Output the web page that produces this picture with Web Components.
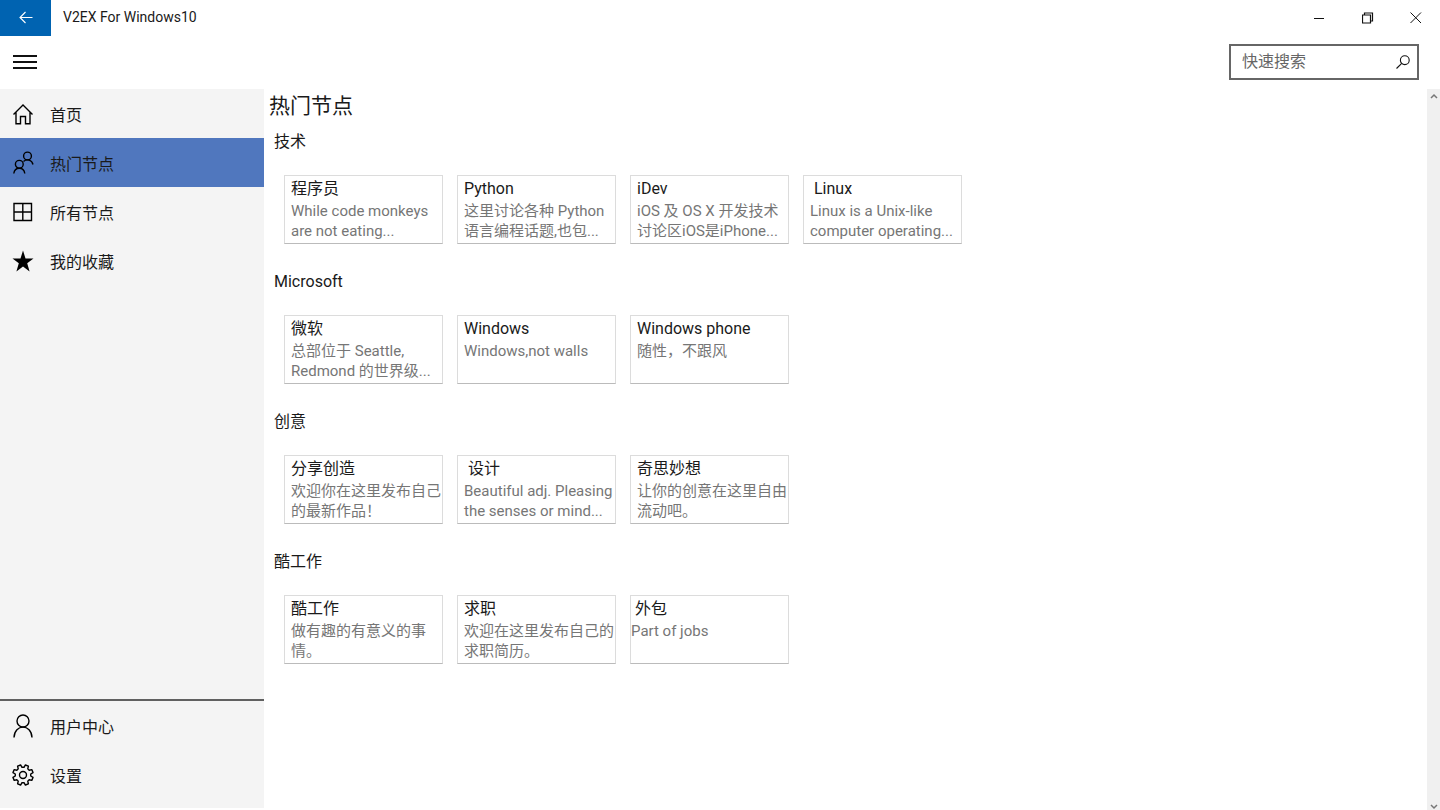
<!DOCTYPE html>
<html lang="zh-CN">
<head>
<meta charset="utf-8">
<meta name="viewport" content="width=device-width, initial-scale=1">
<title>V2EX For Windows10</title>
<style>
    body {
        margin: 0;
        font-family: Roboto, "Noto Sans CJK SC", sans-serif;
        font-size: 16px;
        color: #1a1a1a;
        background: #fff;
    }
</style>
</head>
<body>
<v2-app>
    <v2-titlebar slot="titlebar">V2EX For Windows10</v2-titlebar>
    <v2-toolbar slot="toolbar" placeholder="快速搜索"></v2-toolbar>

    <v2-nav slot="nav">
        <v2-nav-item icon="home">首页</v2-nav-item>
        <v2-nav-item icon="people" active>热门节点</v2-nav-item>
        <v2-nav-item icon="grid">所有节点</v2-nav-item>
        <v2-nav-item icon="star">我的收藏</v2-nav-item>
        <v2-nav-item slot="footer" icon="user">用户中心</v2-nav-item>
        <v2-nav-item slot="footer" icon="gear">设置</v2-nav-item>
    </v2-nav>

    <v2-page heading="热门节点">
        <v2-section heading="技术">
            <v2-node name="程序员">While code monkeys are not eating...</v2-node>
            <v2-node name="Python">这里讨论各种 Python 语言编程话题,也包...</v2-node>
            <v2-node name="iDev">iOS 及 OS X 开发技术讨论区iOS是iPhone...</v2-node>
            <v2-node name=" Linux">Linux is a Unix-like computer operating...</v2-node>
        </v2-section>
        <v2-section heading="Microsoft">
            <v2-node name="微软">总部位于 Seattle, Redmond 的世界级...</v2-node>
            <v2-node name="Windows">Windows,not walls</v2-node>
            <v2-node name="Windows phone">随性，不跟风</v2-node>
        </v2-section>
        <v2-section heading="创意">
            <v2-node name="分享创造">欢迎你在这里发布自己的最新作品！</v2-node>
            <v2-node name=" 设计">Beautiful adj. Pleasing the senses or mind...</v2-node>
            <v2-node name="奇思妙想">让你的创意在这里自由流动吧。</v2-node>
        </v2-section>
        <v2-section heading="酷工作">
            <v2-node name="酷工作">做有趣的有意义的事情。</v2-node>
            <v2-node name="求职">欢迎在这里发布自己的求职简历。</v2-node>
            <v2-node name=" 外包" flush>Part of jobs</v2-node>
        </v2-section>
    </v2-page>
</v2-app>

<script>
const ICONS = {
    home: '<path d="M2.5 12.500 12 3 21.500 12.500M5 10.300V21.700H9.500V14.500H14.500V21.700H19V10.300"/>',
    people: '<circle cx="16.500" cy="5" r="3.900"/><path d="M12.500 10.500C15.500 7.700 21 8.500 22 13.500"/><circle cx="8.300" cy="13.300" r="3.900"/><path d="M2.800 22.500C3.800 15.500 12.800 15.500 13.800 22.500"/>',
    grid: '<path d="M3 3.500H20.500V20.500H3ZM11.800 3.500V20.500M3 12H20.500"/>',
    star: '<path fill="currentColor" stroke="none" d="M12 1.500 14.500 9.500H22.500L16.200 14.300 18.600 22.500 12 17.500 5.400 22.500 7.800 14.300 1.500 9.500H9.500Z"/>',
    user: '<circle cx="12" cy="7" r="6"/><path d="M3 23.500C3.500 9.700 20.500 9.700 21 23.500"/>'
};

// Gear outline: eight rounded teeth around the hub
function gearPath() {
    const points = [];
    for (let i = 0; i < 8; i++) {
        [[-15, 7.8], [-9, 10.300], [9, 10.300], [15, 7.8]].forEach(([deg, r]) => {
            const a = (i * 45 + 22.500 + deg) * Math.PI / 180;
            points.push((12 + r * Math.cos(a)).toFixed(2) + ' ' + (12 + r * Math.sin(a)).toFixed(2));
        });
    }
    return `<path stroke-linejoin="round" d="M${points.join('L')}Z"/><circle cx="12" cy="12" r="3.500"/>`;
}
ICONS.gear = gearPath();

class V2App extends HTMLElement {
    constructor() {
        super();
        this.attachShadow({ mode: 'open' }).innerHTML = `
            <style>
                :host {
                    display: flex;
                    flex-direction: column;
                    height: 100vh;
                }
                .body {
                    display: flex;
                    flex: 1;
                    min-height: 0;
                }
            </style>
            <slot name="titlebar"></slot>
            <slot name="toolbar"></slot>
            <div class="body">
                <slot name="nav"></slot>
                <slot></slot>
            </div>
        `;
    }
}

class V2Titlebar extends HTMLElement {
    constructor() {
        super();
        this.attachShadow({ mode: 'open' }).innerHTML = `
            <style>
                :host {
                    display: flex;
                    height: 36px;
                    font-size: 14px;
                }
                button {
                    display: flex;
                    align-items: center;
                    justify-content: center;
                    width: 48px;
                    padding: 0;
                    border: 0;
                    background: none;
                    color: #111;
                }
                .back {
                    width: 51px;
                    background: #0063b1;
                    color: #fff;
                }
                .title {
                    flex: 1;
                    padding-left: 12px;
                    line-height: 34px;
                }
                svg {
                    fill: none;
                    stroke: currentColor;
                }
            </style>
            <button class="back" aria-label="返回">
                <svg width="16" height="14" viewBox="0 0 16 14" stroke-width="1.1"><path d="M14.500 6.500H2M7.500 1 2 6.500 7.500 12"/></svg>
            </button>
            <div class="title"><slot></slot></div>
            <button aria-label="最小化">
                <svg width="12" height="12" viewBox="0 0 12 12"><path d="M0 6.500H10"/></svg>
            </button>
            <button aria-label="还原">
                <svg width="12" height="12" viewBox="0 0 12 12" stroke-width="1.2"><path d="M.5 3H8.500V11H.5ZM2.500 3V1H10.500V9H8.500"/></svg>
            </button>
            <button aria-label="关闭">
                <svg width="12" height="12" viewBox="0 0 12 12"><path d="M.5.500 11 11M11 .500.500 11"/></svg>
            </button>
        `;
    }
}

class V2Toolbar extends HTMLElement {
    constructor() {
        super();
        this.attachShadow({ mode: 'open' });
    }

    connectedCallback() {
        const placeholder = this.getAttribute('placeholder') || '';
        this.shadowRoot.innerHTML = `
            <style>
                :host {
                    display: flex;
                    align-items: center;
                    justify-content: space-between;
                    box-sizing: border-box;
                    height: 53px;
                    padding: 0 21px 2px 13px;
                }
                button {
                    display: flex;
                    padding: 0;
                    border: 0;
                    background: none;
                    color: #111;
                }
                .search {
                    display: flex;
                    align-items: center;
                    box-sizing: border-box;
                    width: 190px;
                    height: 36px;
                    padding: 0 7px 0 11px;
                    border: 2px solid #666;
                }
                input {
                    flex: 1;
                    min-width: 0;
                    padding: 0;
                    border: 0;
                    outline: 0;
                    background: none;
                    font: inherit;
                    color: inherit;
                }
                input::placeholder {
                    color: #666;
                    opacity: 1;
                }
                svg {
                    fill: none;
                    stroke: currentColor;
                }
            </style>
            <button aria-label="菜单">
                <svg width="24" height="14" viewBox="0 0 24 14" stroke-width="2"><path d="M0 1H24M0 7H24M0 13H24"/></svg>
            </button>
            <div class="search">
                <input type="text" aria-label="${placeholder}" placeholder="${placeholder}">
                <button aria-label="搜索">
                    <svg width="14" height="14" viewBox="0 0 14 14" stroke-width="1.1"><circle cx="8.800" cy="5.200" r="4.400"/><path d="M5.700 8.300.500 13.500"/></svg>
                </button>
            </div>
        `;
    }
}

class V2Nav extends HTMLElement {
    constructor() {
        super();
        this.attachShadow({ mode: 'open' }).innerHTML = `
            <style>
                :host {
                    display: flex;
                    flex-direction: column;
                    justify-content: space-between;
                    flex: none;
                    width: 264px;
                    margin-bottom: 2px;
                    background: #f4f4f4;
                }
                .footer {
                    padding-bottom: 9px;
                    border-top: 2px solid #606060;
                }
            </style>
            <nav><slot></slot></nav>
            <div class="footer"><slot name="footer"></slot></div>
        `;
    }
}

class V2NavItem extends HTMLElement {
    constructor() {
        super();
        this.attachShadow({ mode: 'open' });
    }

    connectedCallback() {
        this.shadowRoot.innerHTML = `
            <style>
                :host {
                    display: block;
                }
                a {
                    display: flex;
                    align-items: center;
                    gap: 15px;
                    height: 49px;
                    padding-left: 11px;
                    color: inherit;
                    text-decoration: none;
                }
                :host([active]) a {
                    background: #5077be;
                }
                svg {
                    width: 24px;
                    height: 24px;
                    fill: none;
                    stroke: currentColor;
                    stroke-width: 1.4;
                    color: #000;
                }
            </style>
            <a href="#">
                <svg viewBox="0 0 24 24">${ICONS[this.getAttribute('icon')] || ''}</svg>
                <slot></slot>
            </a>
        `;
    }
}

class V2Page extends HTMLElement {
    constructor() {
        super();
        this.attachShadow({ mode: 'open' });
    }

    connectedCallback() {
        this.shadowRoot.innerHTML = `
            <style>
                :host {
                    display: flex;
                    flex: 1;
                    min-width: 0;
                }
                main {
                    flex: 1;
                    min-width: 0;
                    padding-left: 5px;
                    overflow: hidden;
                }
                h1 {
                    margin: 0;
                    font-size: 21px;
                    font-weight: 400;
                    line-height: 34px;
                }
                .scrollbar {
                    display: flex;
                    flex-direction: column;
                    justify-content: space-between;
                    align-items: center;
                    box-sizing: border-box;
                    width: 13px;
                    padding: 4px 0 0;
                    background: #f0f0f0;
                }
                svg {
                    fill: none;
                    stroke: #777;
                    stroke-width: 1.5;
                }
            </style>
            <main>
                <h1>${this.getAttribute('heading')}</h1>
                <slot></slot>
            </main>
            <div class="scrollbar" aria-hidden="true">
                <svg width="8" height="6" viewBox="0 0 8 6"><path d="M1 5 4 2 7 5"/></svg>
                <svg width="8" height="6" viewBox="0 0 8 6"><path d="M1 1 4 4 7 1"/></svg>
            </div>
        `;
    }
}

class V2Section extends HTMLElement {
    constructor() {
        super();
        this.attachShadow({ mode: 'open' });
    }

    connectedCallback() {
        this.shadowRoot.innerHTML = `
            <style>
                :host {
                    display: block;
                    padding: 7px 0 0 5px;
                    margin-bottom: 19px;
                }
                h2 {
                    margin: 0;
                    font-size: 16px;
                    font-weight: 400;
                    line-height: 24px;
                }
                .nodes {
                    display: flex;
                    flex-wrap: wrap;
                    gap: 14px;
                    padding: 21px 0 0 10px;
                }
            </style>
            <h2>${this.getAttribute('heading')}</h2>
            <div class="nodes"><slot></slot></div>
        `;
    }
}

class V2Node extends HTMLElement {
    constructor() {
        super();
        this.attachShadow({ mode: 'open' });
    }

    connectedCallback() {
        this.shadowRoot.innerHTML = `
            <style>
                :host {
                    display: block;
                    box-sizing: border-box;
                    width: 159px;
                    height: 69px;
                    padding-left: 6px;
                    border: 1px solid #dcdcdc;
                    border-bottom-color: #bbb;
                }
                :host([flush]) {
                    padding-left: 0;
                }
                h3 {
                    margin: 0;
                    font-size: 16px;
                    font-weight: 400;
                    line-height: 25px;
                    white-space: pre;
                }
                p {
                    margin: 0;
                    font-size: 15px;
                    line-height: 20px;
                    color: #767676;
                }
            </style>
            <h3>${this.getAttribute('name')}</h3>
            <p><slot></slot></p>
        `;
    }
}

customElements.define('v2-app', V2App);
customElements.define('v2-titlebar', V2Titlebar);
customElements.define('v2-toolbar', V2Toolbar);
customElements.define('v2-nav', V2Nav);
customElements.define('v2-nav-item', V2NavItem);
customElements.define('v2-page', V2Page);
customElements.define('v2-section', V2Section);
customElements.define('v2-node', V2Node);
</script>
</body>
</html>
